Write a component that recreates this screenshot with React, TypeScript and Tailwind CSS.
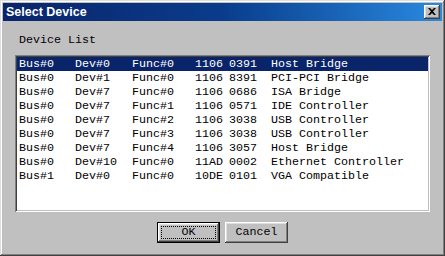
const rows = [
  ['Bus#0', 'Dev#0', 'Func#0', '1106', '0391', 'Host Bridge'],
  ['Bus#0', 'Dev#1', 'Func#0', '1106', '8391', 'PCI-PCI Bridge'],
  ['Bus#0', 'Dev#7', 'Func#0', '1106', '0686', 'ISA Bridge'],
  ['Bus#0', 'Dev#7', 'Func#1', '1106', '0571', 'IDE Controller'],
  ['Bus#0', 'Dev#7', 'Func#2', '1106', '3038', 'USB Controller'],
  ['Bus#0', 'Dev#7', 'Func#3', '1106', '3038', 'USB Controller'],
  ['Bus#0', 'Dev#7', 'Func#4', '1106', '3057', 'Host Bridge'],
  ['Bus#0', 'Dev#10', 'Func#0', '11AD', '0002', 'Ethernet Controller'],
  ['Bus#1', 'Dev#0', 'Func#0', '10DE', '0101', 'VGA Compatible'],
];

// classic raised bevel
const raised =
  'shadow-[inset_-1px_-1px_#404040,inset_1px_1px_#ffffff,inset_-2px_-2px_#808080,inset_2px_2px_#dfdfdf]';

export default function App() {
  return (
    <div
      className={`w-[445px] h-[256px] bg-[#c0c0c0] p-[3px] flex flex-col font-['Liberation_Mono',monospace] ${'shadow-[inset_-1px_-1px_#404040,inset_1px_1px_#dfdfdf,inset_-2px_-2px_#808080,inset_2px_2px_#ffffff]'}`}
    >
      {/* Title bar */}
      <div className="h-[18px] flex items-center justify-between pl-[3px] pr-[2px] bg-gradient-to-r from-[#0a246a] via-[#0a3c8c] to-[#2a8ae0]">
        <span className="text-white font-bold text-[12.5px] leading-none font-['Liberation_Sans',Arial,sans-serif]">
          Select Device
        </span>
        <button className={`w-[16px] h-[14px] bg-[#c0c0c0] flex items-center justify-center ${raised}`}>
          <svg width="8" height="7" viewBox="0 0 8 7" className="-mt-[1px]">
            <path d="M0 0h2l2 2 2-2h2L5 3.5 8 7H6L4 5 2 7H0l3-3.5z" fill="#000" />
          </svg>
        </button>
      </div>

      {/* Body */}
      <div className="flex-1 flex flex-col px-[12px]">
        <div className="mt-[12px] h-[14px] leading-[14px] text-[11.67px] pl-[4px] text-black">Device List</div>
        <div className="mt-[8px] h-[157px] bg-white p-[2px] shadow-[inset_1px_1px_#808080,inset_-1px_-1px_#ffffff,inset_2px_2px_#404040,inset_-2px_-2px_#c0c0c0]">
          {rows.map((r, i) => (
            <div
              key={i}
              className={`flex h-[14px] leading-[14px] text-[11.67px] pl-[2px] whitespace-pre ${
                i === 0 ? 'bg-[#0a246a] text-white' : 'text-black'
              }`}
            >
              <span className="w-[56px]">{r[0]}</span>
              <span className="w-[57px]">{r[1]}</span>
              <span className="w-[63px]">{r[2]}</span>
              <span className="w-[34px]">{r[3]}</span>
              <span className="w-[42px]">{r[4]}</span>
              <span>{r[5]}</span>
            </div>
          ))}
        </div>

        {/* Buttons */}
        <div className="mt-[10px] flex justify-center gap-[5px] text-[11.67px] text-black">
          <button className="w-[63px] h-[21px] border border-black bg-[#c0c0c0] p-0">
            <div className={`w-full h-full p-[3px] ${raised}`}>
              <div className="w-full h-full border border-dotted border-black flex items-center justify-center leading-none">
                OK
              </div>
            </div>
          </button>
          <button className={`w-[63px] h-[21px] bg-[#c0c0c0] flex items-center justify-center leading-none ${raised}`}>
            Cancel
          </button>
        </div>
      </div>
    </div>
  );
}
